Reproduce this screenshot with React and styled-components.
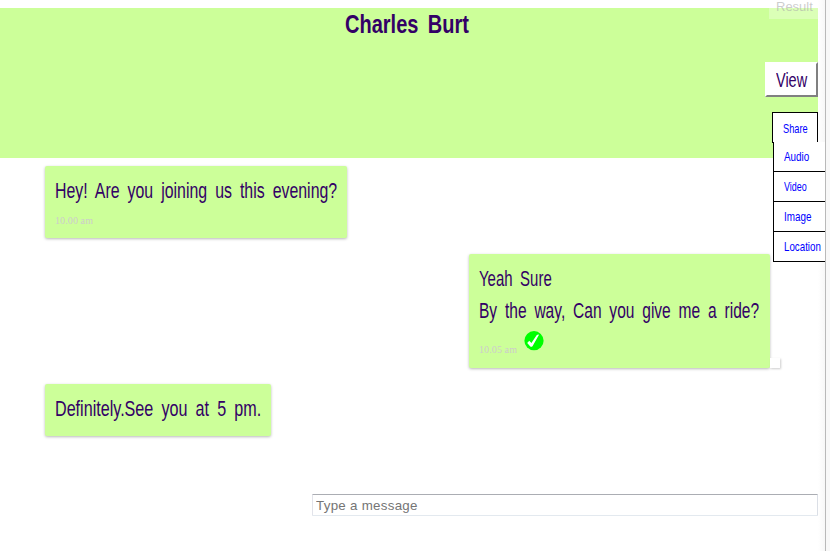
import React from "react";
import styled, { createGlobalStyle } from "styled-components";

const GlobalStyle = createGlobalStyle`
  * { box-sizing: border-box; }
  body { margin: 0; background: #fff; overflow: hidden; }
`;

const handFont = `Chiller, "Liberation Sans", sans-serif`;

const Frame = styled.div`
  position: relative;
  width: 830px;
  height: 551px;
  display: flex;
  overflow: hidden;
`;

const Page = styled.main`
  width: 818px;
  padding-top: 8px;
`;

const Gutter = styled.div`
  width: 7px;
  background: linear-gradient(90deg, #fff, #f7f7f7);
`;

const Divider = styled.div`
  width: 5px;
  border-left: 1px solid #b9b9b9;
  background: #f8f8f8;
`;

const Narrow = styled.span`
  display: inline-block;
  transform: scaleX(${(p) => p.$scale});
  transform-origin: left;
  white-space: nowrap;
`;

const Header = styled.header`
  height: 150px;
  background: #cf9;
  display: flex;
  flex-direction: column;
  align-items: flex-end;
`;

const Title = styled.h1`
  margin: 0;
  width: 100%;
  height: 54px;
  padding-left: 345px;
  font: bold 26px/32px ${handFont};
  word-spacing: 5px;
  color: #306;
`;

const ViewButton = styled.button`
  width: 53px;
  height: 35px;
  padding: 0 0 0 9px;
  border: 2px solid;
  border-color: #fff #808080 #808080 #fff;
  background: #fff;
  color: #306;
  font: 21px/31px ${handFont};
  text-align: left;
`;

const ShareMenu = styled.nav`
  position: relative;
  width: 46px;
  margin-top: 15px;
`;

const ShareLink = styled.a`
  display: block;
  height: 31px;
  padding-left: 10px;
  border: 1px solid #000;
  background: #fff;
  color: #00f;
  font: 13px/31px ${handFont};
`;

const MenuList = styled.div`
  position: absolute;
  z-index: 1;
  top: 30px;
  left: 1px;
  width: 52px;
`;

const MenuItem = styled.a`
  display: block;
  height: 30px;
  padding-left: 10px;
  border-left: 1px solid #000;
  border-bottom: 1px solid #000;
  background: #fff;
  color: #00f;
  font: 13px/30px ${handFont};
`;

const Thread = styled.section`
  height: 336px;
  padding: 8px 48px 0 45px;
  display: flex;
  flex-direction: column;
  align-items: flex-start;
`;

const Bubble = styled.article`
  position: relative;
  width: ${(p) => p.$width}px;
  height: ${(p) => p.$height}px;
  margin-bottom: 16px;
  align-self: ${(p) => (p.$sent ? "flex-end" : "flex-start")};
  padding: 9px 10px;
  border-radius: 2px;
  background: #cf9;
  box-shadow: 0 1px 3px rgba(0, 0, 0, 0.28);
`;

const Line = styled.p`
  margin: 0;
  height: 32px;
  color: #306;
  font: 22px/32px ${handFont};
  word-spacing: 5px;
`;

const Meta = styled.div`
  display: flex;
  align-items: flex-start;
  gap: 7px;
`;

const Time = styled.time`
  display: block;
  padding-top: ${(p) => p.$top}px;
  color: #ccc;
  font: 10px/12px "Liberation Serif", serif;
  letter-spacing: 0.1px;
`;

const Tick = styled.svg`
  width: 20px;
  height: 20px;
  margin-top: 4px;
`;

const Tail = styled.span`
  position: absolute;
  left: 100%;
  bottom: 0;
  width: 10px;
  height: 10px;
  background: #fff;
  box-shadow: 1px 1px 2px rgba(0, 0, 0, 0.2);
`;

const Composer = styled.form`
  display: flex;
  justify-content: flex-end;
`;

const MessageInput = styled.input`
  width: 506px;
  height: 22px;
  padding: 1px 3px;
  border: 1px solid;
  border-color: #abadb3 #dbdfe6 #e3e9ef #e2e3ea;
  border-radius: 1px;
  outline: 0;
  font: 13.333px "Liberation Sans", sans-serif;
  letter-spacing: 0.28px;
  &::placeholder { color: #757575; opacity: 1; }
`;

const ResultBadge = styled.div`
  position: absolute;
  top: 0;
  left: 769px;
  width: 49px;
  height: 19px;
  padding-left: 7px;
  background: rgba(255, 255, 255, 0.3);
  color: rgba(170, 170, 170, 0.6);
  font: 13px/14px "Liberation Sans", sans-serif;
`;

const menuItems = [
  { label: "Audio", scale: 0.76 },
  { label: "Video", scale: 0.69 },
  { label: "Image", scale: 0.76 },
  { label: "Location", scale: 0.75 },
];

export default function App() {
  return (
    <Frame>
      <GlobalStyle />
      <Page>
        <Header>
          <Title><Narrow $scale={0.77}>Charles Burt</Narrow></Title>
          <ViewButton><Narrow $scale={0.69}>View</Narrow></ViewButton>
          <ShareMenu>
            <ShareLink><Narrow $scale={0.71}>Share</Narrow></ShareLink>
            <MenuList>
              {menuItems.map(({ label, scale }) => (
                <MenuItem key={label}><Narrow $scale={scale}>{label}</Narrow></MenuItem>
              ))}
            </MenuList>
          </ShareMenu>
        </Header>
        <Thread>
          <Bubble $width={302} $height={72}>
            <Line><Narrow $scale={0.722}>Hey! Are you joining us this evening?</Narrow></Line>
            <Time $top={8}>10.00 am</Time>
          </Bubble>
          <Bubble $sent $width={301} $height={114}>
            <Line><Narrow $scale={0.68}>Yeah Sure</Narrow></Line>
            <Line><Narrow $scale={0.706}>By the way, Can you give me a ride?</Narrow></Line>
            <Meta>
              <Time $top={17}>10.05 am</Time>
              <Tick viewBox="0 0 20 20">
                <circle cx="10" cy="9.7" r="9.6" fill="#0f0" />
                <path d="M3.2 11.9 5.3 9.7 7.4 12 12.6 4.2Q13.8 3.3 15 3.7L8.5 15.2Q7.5 16.1 6.3 15.6Z" fill="#fff" />
              </Tick>
            </Meta>
            <Tail />
          </Bubble>
          <Bubble $width={226} $height={52}>
            <Line><Narrow $scale={0.733}>Definitely.See you at 5 pm.</Narrow></Line>
          </Bubble>
        </Thread>
        <Composer>
          <MessageInput placeholder="Type a message" />
        </Composer>
      </Page>
      <Gutter />
      <Divider />
      <ResultBadge>Result</ResultBadge>
    </Frame>
  );
}
